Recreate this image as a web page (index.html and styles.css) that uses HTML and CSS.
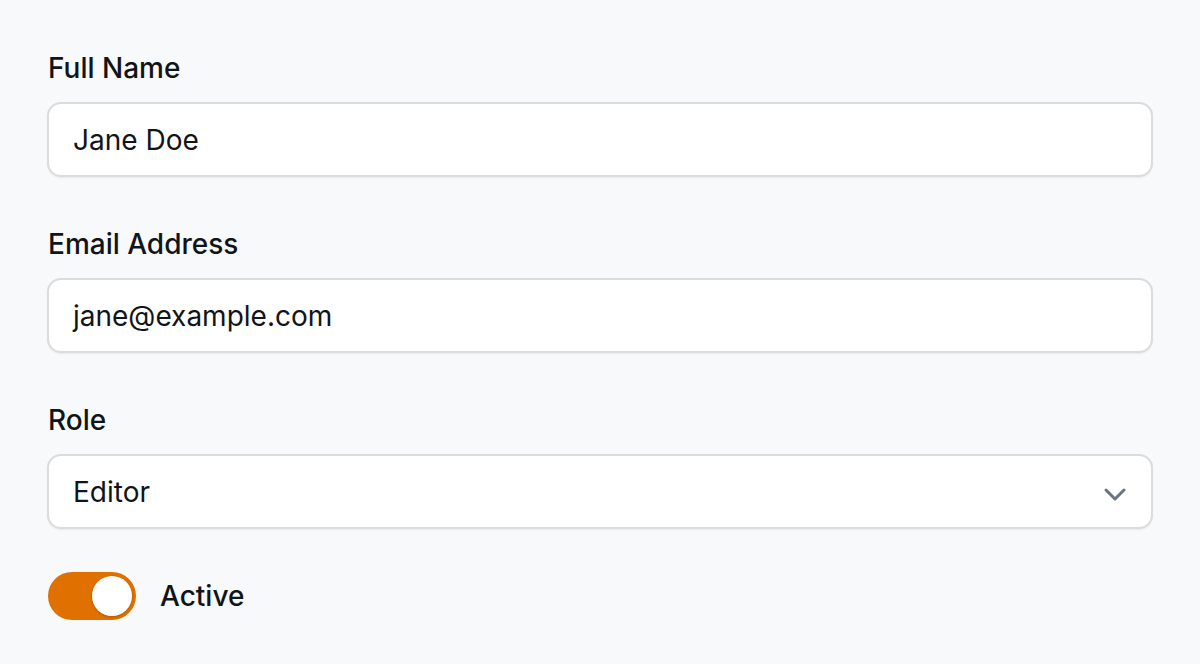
FILE: index.html
```html
<!DOCTYPE html>
<html>
<head>
<meta charset="utf-8">
<link rel="stylesheet" href="styles.css">
</head>
<body>
<form class="form">
  <div class="field">
    <label class="label">Full Name</label>
    <div class="input">Jane Doe</div>
  </div>
  <div class="field">
    <label class="label">Email Address</label>
    <div class="input">jane@example.com</div>
  </div>
  <div class="field">
    <label class="label">Role</label>
    <div class="input select">
      <span>Editor</span>
      <svg class="chev" width="24" height="24" viewBox="0 0 24 24" fill="none" stroke="#6b7280" stroke-width="3" stroke-linecap="round" stroke-linejoin="round"><path d="M3 10l9 9 9-9"/></svg>
    </div>
  </div>
  <div class="toggle-row">
    <span class="toggle"><span class="knob"></span></span>
    <span class="toggle-label">Active</span>
  </div>
</form>
</body>
</html>
```
FILE: styles.css
```css
html, body {
  margin: 0;
  padding: 0;
  background: #f8f9fb;
}
body {
  font-family: Inter, "Noto Sans", sans-serif;
  color: #111418;
}
.form {
  padding: 48px 47px 0 47px;
  display: flex;
  flex-direction: column;
  gap: 47px;
}
.field {
  display: flex;
  flex-direction: column;
  gap: 14px;
}
.label {
  font-size: 28px;
  line-height: 39px;
  padding-top: 1px;
  font-weight: 500;
  padding-left: 1px;
}
.input {
  height: 71px;
  box-sizing: content-box;
  border: 2px solid #dcdcde;
  border-radius: 14px;
  background: #fff;
  box-shadow: 0 1px 2px rgba(0,0,0,0.06);
  display: flex;
  align-items: center;
  padding: 0 24px;
  font-size: 28px;
  color: #111418;
}
.select {
  justify-content: space-between;
}
.chev {
  margin-right: 0;
}
.toggle-row {
  display: flex;
  align-items: center;
  gap: 24px;
  margin-top: -4px;
  padding-left: 1px;
}
.toggle {
  width: 88px;
  height: 48px;
  border-radius: 24px;
  background: #e07000;
  display: flex;
  align-items: center;
  justify-content: flex-end;
  padding: 4px;
  box-sizing: border-box;
}
.knob {
  width: 40px;
  height: 40px;
  border-radius: 50%;
  background: #fff;
  box-shadow: 0 1px 3px rgba(0,0,0,0.2);
}
.toggle-label {
  font-size: 28px;
  font-weight: 500;
}
```
